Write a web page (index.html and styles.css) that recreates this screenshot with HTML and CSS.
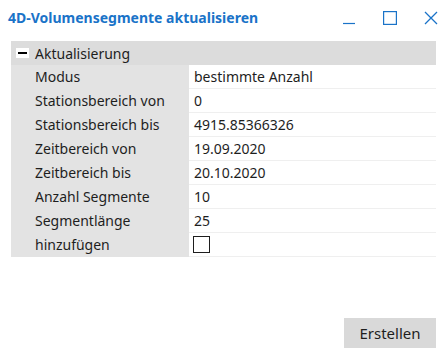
FILE: index.html
```html
<!DOCTYPE html>
<html lang="de">
<head>
  <meta charset="UTF-8" />
  <title>4D-Volumensegmente aktualisieren</title>
  <link rel="stylesheet" href="styles.css">
</head>
<body>
  <div class="window">
    <header class="titlebar">
      <h1>4D-Volumensegmente aktualisieren</h1>
      <div class="controls">
        <svg width="14" height="14" viewBox="0 0 14 14"><path d="M1 12.5h12" stroke="#1a73c8" stroke-width="1.2" fill="none"/></svg>
        <svg width="14" height="14" viewBox="0 0 14 14"><rect x="0.6" y="0.6" width="12.8" height="12.8" stroke="#1a73c8" stroke-width="1.2" fill="none"/></svg>
        <svg width="14" height="14" viewBox="0 0 14 14"><path d="M1 1l12 12M13 1L1 13" stroke="#1a73c8" stroke-width="1.3" fill="none"/></svg>
      </div>
    </header>

    <section class="grid">
      <div class="group">
        <span class="toggle"></span>
        <span>Aktualisierung</span>
      </div>
      <div class="rows">
        <div class="row"><div class="label">Modus</div><div class="value">bestimmte Anzahl</div></div>
        <div class="row"><div class="label">Stationsbereich von</div><div class="value">0</div></div>
        <div class="row"><div class="label">Stationsbereich bis</div><div class="value">4915.85366326</div></div>
        <div class="row"><div class="label">Zeitbereich von</div><div class="value">19.09.2020</div></div>
        <div class="row"><div class="label">Zeitbereich bis</div><div class="value">20.10.2020</div></div>
        <div class="row"><div class="label">Anzahl Segmente</div><div class="value">10</div></div>
        <div class="row"><div class="label">Segmentlänge</div><div class="value">25</div></div>
        <div class="row"><div class="label">hinzufügen</div><div class="value"><span class="check"></span></div></div>
      </div>
    </section>

    <footer class="actions">
      <button class="btn">Erstellen</button>
    </footer>
  </div>
</body>
</html>
```

FILE: styles.css
```css
* {
  margin: 0;
  padding: 0;
  box-sizing: border-box;
}

body {
  background: #fff;
  color: #1e1e1e;
  font-family: 'Segoe UI', 'Noto Sans', 'Open Sans', sans-serif;
  font-size: 14px;
}

.window {
  width: 442px;
  height: 357px;
  padding: 0 6px 9px 11px;
  display: flex;
  flex-direction: column;
}

.titlebar {
  height: 41px;
  display: flex;
  align-items: flex-start;
  justify-content: space-between;
  margin-left: -3px;
  padding-top: 8px;
}

.titlebar h1 {
  font-size: 14px;
  font-weight: bold;
  color: #1a73c8;
}

.controls {
  display: flex;
  gap: 27px;
  padding-top: 3px;
  margin-right: -2px;
}

.grid {
  background: #e3e3e3;
  width: 425px;
}

.group {
  height: 24px;
  background: #dcdcdc;
  display: flex;
  align-items: center;
  gap: 6px;
  padding-left: 5px;
}

.toggle {
  width: 13px;
  height: 10px;
  background: #fff;
  position: relative;
}

.toggle::after {
  content: '';
  position: absolute;
  left: 2px;
  right: 2px;
  top: 4px;
  height: 2px;
  background: #000;
}

.rows {
  padding-left: 20px;
}

.row {
  display: flex;
  height: 24px;
}

.label {
  width: 158px;
  padding-left: 4px;
  line-height: 23px;
}

.value {
  flex: 1;
  background: #fff;
  border-bottom: 1px solid #efefef;
  padding-left: 5px;
  line-height: 23px;
  display: flex;
  align-items: center;
}

.check {
  width: 17px;
  height: 17px;
  border: 1px solid #1e1e1e;
  background: #fff;
  margin-left: -1px;
}

.actions {
  margin-top: auto;
  display: flex;
  justify-content: flex-end;
}

.btn {
  width: 92px;
  height: 30px;
  background: #d9d9d9;
  border: none;
  font-family: inherit;
  font-size: 15px;
  color: #1e1e1e;
}
```
